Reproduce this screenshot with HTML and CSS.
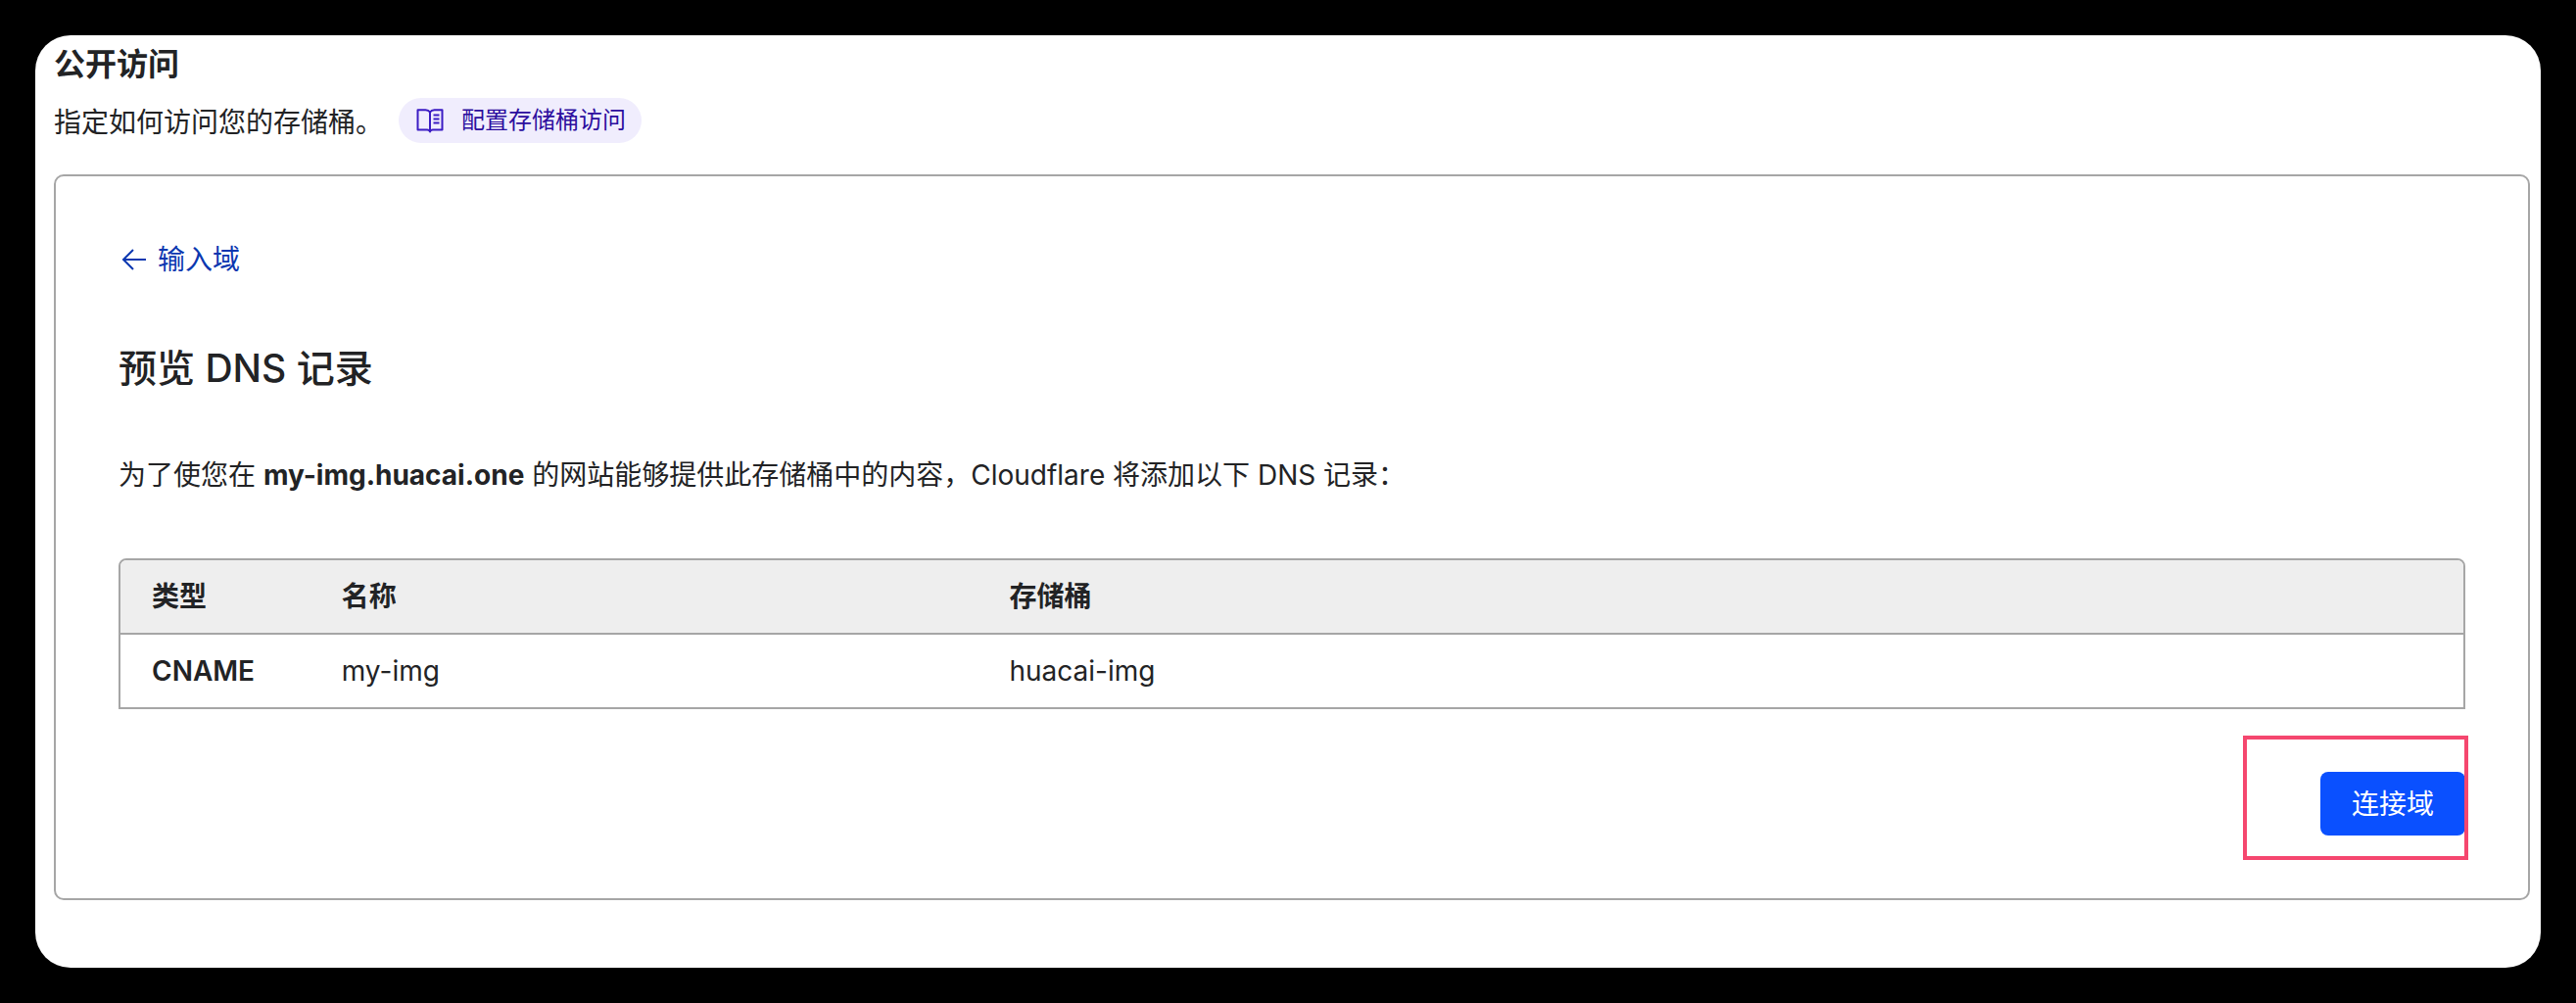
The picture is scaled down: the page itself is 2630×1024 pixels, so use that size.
FILE: index.html
```html
<!DOCTYPE html>
<html lang="zh-CN">
<head>
<meta charset="utf-8">
<meta name="viewport" content="width=device-width, initial-scale=1">
<title>公开访问</title>
<link rel="stylesheet" href="styles.css">
</head>
<body>
<main class="window">
  <h1 class="title">公开访问</h1>
  <div class="intro">
    <p class="intro-text">指定如何访问您的存储桶。</p>
    <a class="doc-link" href="#docs">
      <svg class="doc-icon" viewBox="0 0 28 28" fill="none" stroke="currentColor" stroke-width="2" stroke-linejoin="round" aria-hidden="true">
        <path d="M14 5.5C13 4 11.500 3.200 9.500 3.200H1.500V23.500H11C12.500 23.500 13.500 24 14 25.500C14.500 24 15.500 23.500 17 23.500H26.500V3.200H18.500C16.500 3.200 15 4 14 5.500V25"/>
        <path d="M17.500 8.500H23.500M17.500 12.500H23.500M17.500 16.500H23.500"/>
      </svg>
      <span>配置存储桶访问</span>
    </a>
  </div>
  <section class="panel">
    <a class="back-link" href="#domain">
      <svg class="back-icon" viewBox="0 0 28 28" fill="none" stroke="currentColor" stroke-width="2" aria-hidden="true">
        <path d="M26 14H3M13 4L3 14L13 24"/>
      </svg>
      <span>输入域</span>
    </a>
    <h2 class="panel-title">预览 DNS 记录</h2>
    <p class="description">为了使您在 <strong>my-img.huacai.one</strong> 的网站能够提供此存储桶中的内容，Cloudflare 将添加以下 DNS 记录：</p>
    <table class="records">
      <thead>
        <tr><th class="col-type" scope="col">类型</th><th class="col-name" scope="col">名称</th><th scope="col">存储桶</th></tr>
      </thead>
      <tbody>
        <tr><th scope="row">CNAME</th><td>my-img</td><td>huacai-img</td></tr>
      </tbody>
    </table>
    <div class="actions">
      <div class="highlighted">
        <button class="connect" type="button">连接域</button>
      </div>
    </div>
  </section>
</main>
</body>
</html>
```

FILE: styles.css
```css
* {
  box-sizing: border-box;
}

body {
  display: flex;
  min-height: 100vh;
  margin: 0;
  padding: 36px;
  background: #000;
  color: #222325;
  font: 28px/42px Inter, "Noto Sans CJK SC", sans-serif;
}

h1, h2, p {
  margin: 0;
}

strong {
  font-weight: 700;
}

.window {
  flex: 1;
  min-width: 0;
  padding: 6px 11px 68px 19px;
  border-radius: 36px;
  background: #fff;
}

.title {
  font-size: 32px;
  line-height: 48px;
  font-weight: 600;
}

.intro {
  display: flex;
  flex-wrap: wrap;
  align-items: flex-end;
  gap: 16px;
  margin-top: 10px;
}

.doc-link {
  display: inline-flex;
  align-items: center;
  gap: 18px;
  padding: 2px 16px 2px 18px;
  border-radius: 24px;
  background: #f0edfd;
  color: #2c0d9e;
  font-size: 24px;
  text-decoration: none;
}

.doc-icon {
  width: 28px;
  height: 28px;
  color: #3b1cc4;
}

.panel {
  margin-top: 32px;
  padding: 64px;
  border: 2px solid #a6a6a6;
  border-radius: 10px;
}

.back-link {
  display: flex;
  align-items: center;
  gap: 10px;
  width: fit-content;
  padding-left: 2px;
  color: #0b37b0;
  text-decoration: none;
}

.back-icon {
  width: 28px;
  height: 28px;
}

.panel-title {
  margin-top: 60px;
  font-size: 39px;
  line-height: 60px;
  font-weight: 500;
}

.description {
  margin-top: 58px;
}

.records {
  width: 100%;
  margin-top: 64px;
  border: 2px solid #a6a6a6;
  border-radius: 8px 8px 0 0;
  border-spacing: 0;
  table-layout: fixed;
  overflow: hidden;
}

.records th,
.records td {
  padding: 16px 32px;
  text-align: left;
}

.records th {
  font-weight: 600;
}

.records thead th {
  border-bottom: 2px solid #a6a6a6;
  background: #eee;
}

.col-type {
  width: 8.1%;
}

.col-name {
  width: 28.5%;
}

.actions {
  display: flex;
  justify-content: flex-end;
  margin-top: 64px;
}

.highlighted {
  position: relative;
}

/* Marker frame drawn over the button */
.highlighted::after {
  content: "";
  position: absolute;
  inset: -37px -3px -25px -79px;
  border: 4px solid #f5476f;
  pointer-events: none;
}

.connect {
  display: block;
  padding: 12px 32px 11px;
  border: 0;
  border-radius: 8px;
  background: #0a50ff;
  color: #fff;
  font: inherit;
}
```
